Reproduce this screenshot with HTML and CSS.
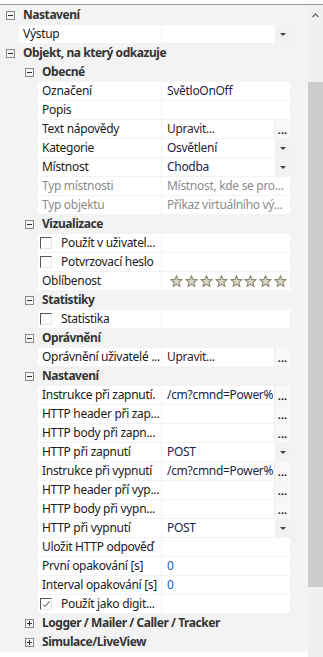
FILE: index.html
```html
<!DOCTYPE html>
<html lang="cs">
<head>
    <meta charset="UTF-8">
    <meta name="viewport" content="width=device-width, initial-scale=1.0">
    <title>Vlastnosti</title>
    <link rel="stylesheet" href="styles.css">
</head>
<body>
    <svg class="defs" width="0" height="0">
        <symbol id="star" viewBox="0 0 13 13">
            <polygon points="6.5,0.6 7.97,4.48 12.2,4.65 8.88,7.27 10,11.6 6.5,9.2 3,11.6 4.12,7.27 0.8,4.65 5.03,4.48" fill="#dcd8ca" stroke="#8f8a74" stroke-width="1.1" stroke-linejoin="round"/>
        </symbol>
        <symbol id="minus" viewBox="0 0 9 9">
            <rect x="0.5" y="0.5" width="8" height="8" fill="none" stroke="#8a8a8a"/>
            <path d="M2 4.5h5" stroke="#333"/>
        </symbol>
        <symbol id="plus" viewBox="0 0 9 9">
            <rect x="0.5" y="0.5" width="8" height="8" fill="none" stroke="#8a8a8a"/>
            <path d="M2 4.5h5M4.5 2v5" stroke="#333"/>
        </symbol>
    </svg>

    <div class="window">
        <div class="topbar"></div>
        <div class="main">
            <div class="grid">
                <div class="rows">
                    <div class="group lvl0"><svg class="exp"><use href="#minus"/></svg><span class="title">Nastavení</span></div>
                    <div class="prop lvl0">
                        <div class="name">Výstup</div>
                        <div class="value"><span class="text"></span><span class="btn drop"></span></div>
                    </div>
                    <div class="group lvl0"><svg class="exp"><use href="#minus"/></svg><span class="title">Objekt, na který odkazuje</span></div>

                    <div class="group lvl1"><svg class="exp"><use href="#minus"/></svg><span class="title">Obecné</span></div>
                    <div class="prop">
                        <div class="name">Označení</div>
                        <div class="value"><span class="text">SvětloOnOff</span></div>
                    </div>
                    <div class="prop">
                        <div class="name">Popis</div>
                        <div class="value"><span class="text"></span></div>
                    </div>
                    <div class="prop">
                        <div class="name">Text nápovědy</div>
                        <div class="value"><span class="text edit">Upravit...</span><span class="btn dots">...</span></div>
                    </div>
                    <div class="prop">
                        <div class="name">Kategorie</div>
                        <div class="value"><span class="text">Osvětlení</span><span class="btn drop"></span></div>
                    </div>
                    <div class="prop">
                        <div class="name">Místnost</div>
                        <div class="value"><span class="text">Chodba</span><span class="btn drop"></span></div>
                    </div>
                    <div class="prop disabled">
                        <div class="name">Typ místnosti</div>
                        <div class="value"><span class="text">Místnost, kde se pro...</span></div>
                    </div>
                    <div class="prop disabled">
                        <div class="name">Typ objektu</div>
                        <div class="value"><span class="text">Příkaz virtuálního vý...</span></div>
                    </div>

                    <div class="group lvl1"><svg class="exp"><use href="#minus"/></svg><span class="title">Vizualizace</span></div>
                    <div class="prop">
                        <div class="name check"><span class="box"></span>Použít v uživatel...</div>
                        <div class="value"></div>
                    </div>
                    <div class="prop">
                        <div class="name check"><span class="box"></span>Potvrzovací heslo</div>
                        <div class="value"></div>
                    </div>
                    <div class="prop">
                        <div class="name">Oblíbenost</div>
                        <div class="value stars">
                            <svg class="star"><use href="#star"/></svg>
                            <svg class="star"><use href="#star"/></svg>
                            <svg class="star"><use href="#star"/></svg>
                            <svg class="star"><use href="#star"/></svg>
                            <svg class="star"><use href="#star"/></svg>
                            <svg class="star"><use href="#star"/></svg>
                            <svg class="star"><use href="#star"/></svg>
                            <svg class="star"><use href="#star"/></svg>
                        </div>
                    </div>

                    <div class="group lvl1"><svg class="exp"><use href="#minus"/></svg><span class="title">Statistiky</span></div>
                    <div class="prop">
                        <div class="name check"><span class="box"></span>Statistika</div>
                        <div class="value"></div>
                    </div>

                    <div class="group lvl1"><svg class="exp"><use href="#minus"/></svg><span class="title">Oprávnění</span></div>
                    <div class="prop">
                        <div class="name">Oprávnění uživatelé ...</div>
                        <div class="value"><span class="text edit">Upravit...</span><span class="btn dots">...</span></div>
                    </div>

                    <div class="group lvl1"><svg class="exp"><use href="#minus"/></svg><span class="title">Nastavení</span></div>
                    <div class="prop">
                        <div class="name">Instrukce při zapnutí.</div>
                        <div class="value"><span class="text">/cm?cmnd=Power%</span><span class="btn dots">...</span></div>
                    </div>
                    <div class="prop">
                        <div class="name">HTTP header při zap...</div>
                        <div class="value"><span class="text"></span><span class="btn dots">...</span></div>
                    </div>
                    <div class="prop">
                        <div class="name">HTTP body při zapn...</div>
                        <div class="value"><span class="text"></span><span class="btn dots">...</span></div>
                    </div>
                    <div class="prop">
                        <div class="name">HTTP při zapnutí</div>
                        <div class="value"><span class="text">POST</span><span class="btn drop"></span></div>
                    </div>
                    <div class="prop">
                        <div class="name">Instrukce při vypnutí</div>
                        <div class="value"><span class="text">/cm?cmnd=Power%</span><span class="btn dots">...</span></div>
                    </div>
                    <div class="prop">
                        <div class="name">HTTP header pří vyp...</div>
                        <div class="value"><span class="text"></span><span class="btn dots">...</span></div>
                    </div>
                    <div class="prop">
                        <div class="name">HTTP body při vypn...</div>
                        <div class="value"><span class="text"></span><span class="btn dots">...</span></div>
                    </div>
                    <div class="prop">
                        <div class="name">HTTP při vypnutí</div>
                        <div class="value"><span class="text">POST</span><span class="btn drop"></span></div>
                    </div>
                    <div class="prop">
                        <div class="name">Uložit HTTP odpověď</div>
                        <div class="value"></div>
                    </div>
                    <div class="prop">
                        <div class="name">První opakování [s]</div>
                        <div class="value"><span class="text num">0</span></div>
                    </div>
                    <div class="prop">
                        <div class="name">Interval opakování [s]</div>
                        <div class="value"><span class="text num">0</span></div>
                    </div>
                    <div class="prop">
                        <div class="name check"><span class="box checked"><svg width="10" height="10" viewBox="0 0 10 10"><path d="M2 5.5l2 2 4.5-5" fill="none" stroke="#333" stroke-width="1"/></svg></span>Použít jako digit...</div>
                        <div class="value"></div>
                    </div>

                    <div class="group lvl1"><svg class="exp"><use href="#plus"/></svg><span class="title">Logger / Mailer / Caller / Tracker</span></div>
                    <div class="group lvl1"><svg class="exp"><use href="#plus"/></svg><span class="title">Simulace/LiveView</span></div>
                </div>
                <div class="footer"></div>
            </div>
            <div class="scrollbar">
                <div class="arrow-up">
                    <svg width="7" height="5" viewBox="0 0 7 5"><path d="M0.5 4L3.5 1l3 3" fill="none" stroke="#606060" stroke-width="1.2"/></svg>
                </div>
                <div class="thumb"></div>
            </div>
        </div>
    </div>
</body>
</html>
```

FILE: styles.css
```css
body {
    margin: 0;
    font-family: "Noto Sans", "Open Sans", sans-serif;
    font-size: 12px;
    letter-spacing: -0.3px;
    color: #1a1a1a;
    background: #fbfbfb;
}
.defs {
    position: absolute;
}
.window {
    height: 657px;
    display: flex;
    flex-direction: column;
    overflow: hidden;
}
.topbar {
    height: 4px;
    flex: none;
    background: #fbfbfb;
    border-bottom: 1px solid #9a9a9a;
}
.main {
    flex: 1;
    display: flex;
    min-height: 0;
}
.grid {
    flex: 1;
    min-width: 0;
    display: flex;
    flex-direction: column;
    background: #f3f3f3;
    padding-top: 1px;
    min-height: 0;
}
.rows {
    margin-right: 18px;
}
.footer {
    flex: 1;
    background: #fff;
}

/* group headers */
.group {
    height: 18px;
    margin-bottom: 1px;
    display: flex;
    align-items: center;
    white-space: nowrap;
}
.group.lvl0 {
    padding-left: 6px;
}
.group.lvl1 {
    padding-left: 25px;
}
.exp {
    width: 9px;
    height: 9px;
    flex: none;
    margin-right: 8px;
}
.title {
    font-weight: bold;
    letter-spacing: -0.45px;
    color: #333;
    line-height: 18px;
}

/* property rows */
.prop {
    height: 18px;
    margin-bottom: 1px;
    margin-left: 38px;
    display: flex;
    gap: 1px;
    line-height: 18px;
    white-space: nowrap;
}
.prop.lvl0 {
    margin-left: 19px;
}
.name {
    width: 123px;
    flex: none;
    background: #fff;
    padding-left: 4px;
    box-sizing: border-box;
    overflow: hidden;
}
.prop.lvl0 .name {
    width: 142px;
}
.value {
    flex: 1;
    display: flex;
    background: #fff;
    min-width: 0;
}
.value .text {
    flex: 1;
    min-width: 0;
    padding-left: 5px;
    color: #1c2444;
    overflow: hidden;
}
.value .text.edit {
    color: #3a1c26;
}
.value .text.num {
    color: #1f5cb8;
}
.prop.disabled .name,
.prop.disabled .text {
    color: #8c8c8c;
}
.btn {
    width: 15px;
    flex: none;
    display: flex;
    align-items: center;
    justify-content: center;
}
.btn.drop {
    background: #f1f1f1;
}
.btn.drop::after {
    content: "";
    border-left: 3px solid transparent;
    border-right: 3px solid transparent;
    border-top: 3px solid #444;
}
.btn.dots {
    background: #f8f8f8;
    border-left: 1px solid #ececec;
    font-weight: bold;
    font-size: 11px;
    letter-spacing: 0;
    color: #222;
    align-items: flex-end;
    line-height: 16px;
}

/* checkboxes */
.name.check {
    display: flex;
    align-items: center;
    padding-left: 2px;
}
.box {
    width: 12px;
    height: 12px;
    flex: none;
    box-sizing: border-box;
    border-left: 1px solid #555;
    border-top: 1px solid #555;
    border-right: 1px solid #e6e6e6;
    border-bottom: 1px solid #e6e6e6;
    margin-right: 9px;
    display: flex;
    align-items: flex-end;
    justify-content: center;
}

/* rating */
.value.stars {
    align-items: center;
    gap: 1.9px;
    padding-left: 8px;
}
.star {
    width: 13px;
    height: 13px;
}

/* scrollbar */
.scrollbar {
    width: 15px;
    flex: none;
    background: #f0f0f0;
    display: flex;
    flex-direction: column;
    align-items: center;
}
.arrow-up {
    height: 20px;
    display: flex;
    align-items: center;
    justify-content: center;
}
.thumb {
    width: 15px;
    height: 505px;
    margin-top: 57px;
    background: #cdcdcd;
}
```
